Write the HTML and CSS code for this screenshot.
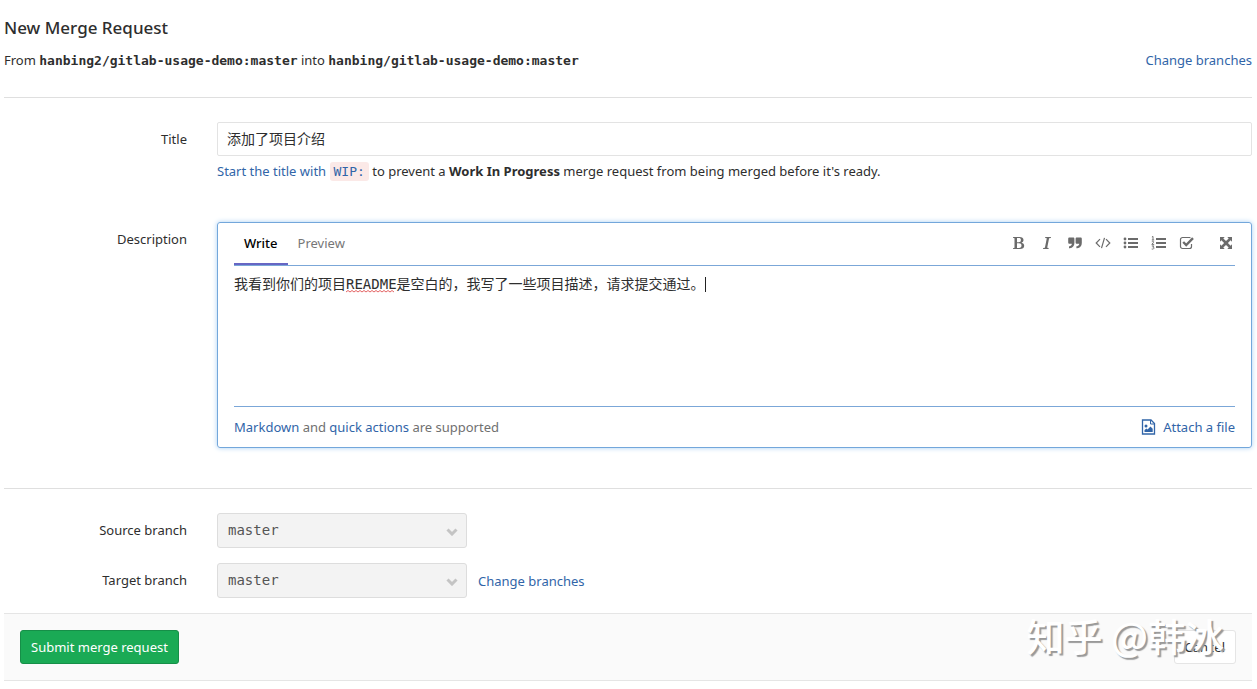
FILE: index.html
```html
<!DOCTYPE html>
<html lang="en">
<head>
<meta charset="utf-8">
<title>New Merge Request</title>
<link rel="stylesheet" href="styles.css">
</head>
<body>
<main class="page">
  <h1 class="page-title">New Merge Request</h1>
  <form class="mr-form">
    <div class="branches">
      <p class="branches-text">From <strong class="ref">hanbing2/gitlab-usage-demo:master</strong> into <strong class="ref">hanbing/gitlab-usage-demo:master</strong></p>
      <a class="link" href="#">Change branches</a>
    </div>

    <div class="row row-title">
      <label class="label" for="title">Title</label>
      <div class="field">
        <input class="text-input" id="title" type="text" value="添加了项目介绍">
        <p class="hint"><a class="link" href="#">Start the title with <code class="code">WIP:</code></a> to prevent a <strong>Work In Progress</strong> merge request from being merged before it's ready.</p>
      </div>
    </div>

    <div class="row row-description">
      <label class="label" for="description">Description</label>
      <div class="editor">
        <div class="editor-head">
          <div class="tabs">
            <button class="tab tab-active" type="button">Write</button>
            <button class="tab" type="button">Preview</button>
          </div>
          <div class="toolbar">
            <button class="tool" type="button" aria-label="Bold"><svg viewBox="0 0 14 14"><path fill-rule="evenodd" d="M1 1h6.5C10 1 11.5 2 11.500 4c0 1.500-.8 2.300-2 2.700 1.800.4 2.700 1.500 2.700 3C12.200 12 10.500 13 8 13H1v-.8l1.500-.4V2.200L1 1.800zM5 2v4.200h1.800C8.200 6.200 8.900 5.500 8.900 4S8.200 2 6.800 2zM5 7.200V12h2c1.700 0 2.500-.8 2.500-2.400S8.700 7.200 7 7.200z"/></svg></button>
            <button class="tool" type="button" aria-label="Italic"><svg viewBox="0 0 14 14"><path d="M5.300 1H11l-.2.900-1.700.3L7.200 11.800l1.500.3-.2.900H3l.2-.9 1.700-.3L6.800 2.200l-1.700-.3z"/></svg></button>
            <button class="tool" type="button" aria-label="Quote"><svg viewBox="0 0 14 14"><path d="M1.500 1.500h3.600c.8 0 1.300.5 1.300 1.300V7c0 3-1.600 4.900-4.600 5.200H1v-2h.8c1.300-.3 2-1 2-2.400H1.500C.7 7.800.2 7.300.2 6.500V2.800c0-.8.5-1.300 1.300-1.300zm7.400 0h3.600c.8 0 1.300.5 1.300 1.300V7c0 3-1.600 4.900-4.600 5.200h-.8v-2h.8c1.300-.3 2-1 2-2.400H8.900c-.8 0-1.300-.5-1.300-1.300V2.800c0-.8.5-1.300 1.300-1.300z"/></svg></button>
            <button class="tool" type="button" aria-label="Code"><svg viewBox="0 0 16 14"><path d="M5 3.200 1.200 7 5 10.800M11 3.200 14.800 7 11 10.800M9.500 1.800l-3 10.400" fill="none" stroke="currentColor" stroke-width="1.200"/></svg></button>
            <button class="tool" type="button" aria-label="Bulleted list"><svg viewBox="0 0 16 14"><path d="M5 2h10v2H5zM5 6h10v2H5zM5 10h10v2H5z"/><circle cx="2" cy="3" r="1.400"/><circle cx="2" cy="7" r="1.400"/><circle cx="2" cy="11" r="1.400"/></svg></button>
            <button class="tool" type="button" aria-label="Numbered list"><svg viewBox="0 0 16 14"><path d="M5 2h10v2H5zM5 6h10v2H5zM5 10h10v2H5z"/><path d="M.9 1 2 .4V4M.8 4h2.400M.8 5.700c1-.8 2.200-.3 1.800.5L.8 8.400h2.400M.8 9.900h2l-1 1.200c2 0 1.500 2.600-1.100 1.900" fill="none" stroke="currentColor" stroke-width=".9"/></svg></button>
            <button class="tool" type="button" aria-label="Task list"><svg viewBox="0 0 16 14"><path d="M12.500 8v2.500a2 2 0 0 1-2 2h-7a2 2 0 0 1-2-2v-7a2 2 0 0 1 2-2h7l1 .3" fill="none" stroke="currentColor" stroke-width="1.200"/><path d="m4.200 6 3 3L14 2.200" fill="none" stroke="currentColor" stroke-width="2.400"/></svg></button>
            <button class="tool tool-last" type="button" aria-label="Full screen"><svg viewBox="0 0 14 14"><path d="M1 1h4.700L4.300 2.400 7 5.100l2.700-2.700L8.300 1H13v4.700l-1.400-1.400L8.900 7l2.700 2.700L13 8.300V13H8.300l1.400-1.400L7 8.900l-2.700 2.700L5.700 13H1V8.300l1.400 1.400L5.100 7 2.400 4.300 1 5.700z"/></svg></button>
          </div>
        </div>
        <div class="editor-body">
          <textarea class="textarea" id="description" spellcheck="false">我看到你们的项目README是空白的，我写了一些项目描述，请求提交通过。</textarea>
          <svg class="squiggle" viewBox="0 0 50 3" aria-hidden="true"><path d="M0 2 2 .500l2 1.500 2-1.500 2 1.500 2-1.500 2 1.500 2-1.500 2 1.500 2-1.500 2 1.500 2-1.500 2 1.500 2-1.500 2 1.500 2-1.500 2 1.500 2-1.500 2 1.500 2-1.500 2 1.500 2-1.500 2 1.500 2-1.500 2 1.500"/></svg>
          <span class="caret"></span>
        </div>
        <div class="editor-foot">
          <p class="support"><a class="link" href="#">Markdown</a> and <a class="link" href="#">quick actions</a> are supported</p>
          <button class="attach" type="button"><svg class="attach-icon" viewBox="0 0 14 16"><path d="M1 1h8.500L13 4.500V15H1z" fill="none" stroke="currentColor" stroke-width="1.300"/><path d="M9 1v4h4" fill="none" stroke="currentColor"/><circle cx="4.500" cy="7" r="1.500"/><path d="M3 13v-2l2-1.500 1 1L9 7.500l2.200 2.200V13z"/></svg>Attach a file</button>
        </div>
      </div>
    </div>

    <div class="branch-rows">
      <div class="row">
        <label class="label" for="source">Source branch</label>
        <div class="select-line">
          <div class="select-box"><select class="select" id="source" disabled><option>master</option></select><svg class="chevron" viewBox="0 0 12 8"><path d="m1.500 1.500 4.500 4.500 4.500-4.500"/></svg></div>
        </div>
      </div>
      <div class="row">
        <label class="label" for="target">Target branch</label>
        <div class="select-line">
          <div class="select-box"><select class="select" id="target" disabled><option>master</option></select><svg class="chevron" viewBox="0 0 12 8"><path d="m1.500 1.500 4.500 4.500 4.500-4.500"/></svg></div>
          <a class="link" href="#">Change branches</a>
        </div>
      </div>
    </div>

    <div class="actions">
      <button class="btn btn-submit" type="submit">Submit merge request</button>
      <button class="btn btn-cancel" type="button">Cancel</button>
      <span class="watermark">知乎 @韩冰</span>
    </div>
  </form>
</main>
</body>
</html>
```

FILE: styles.css
```css
* { box-sizing: border-box; }

body {
  margin: 0;
  background: #fff;
  color: #2e2e2e;
  font: 13px/20px "Noto Sans", "Noto Sans CJK SC", sans-serif;
}

p { margin: 0; }
input, textarea, select, button { font: inherit; color: inherit; margin: 0; }
button { padding: 0; border: 0; background: none; }
svg { fill: currentColor; }

.page { padding: 16px 5px 8px 4px; }
.page-title { margin: 0; font-size: 17px; line-height: 24px; font-weight: 500; }
.link { color: #3165a8; text-decoration: none; }

.branches {
  display: flex;
  justify-content: space-between;
  padding: 10px 0 26px;
  border-bottom: 1px solid #dfdfdf;
}
.ref { font: bold 13px/20px "DejaVu Sans Mono", monospace; }

.row { display: grid; grid-template-columns: 183px 1fr; column-gap: 30px; }
.row-title { padding-top: 24px; }
.row-description { padding: 41px 0 40px; border-bottom: 1px solid #dfdfdf; }
.label { padding-top: 7px; text-align: right; }

.text-input {
  display: block;
  width: 100%;
  height: 34px;
  padding: 5px 9px 7px;
  border: 1px solid #e3e3e3;
  border-radius: 2px;
  font-size: 14px;
}
.hint { padding-top: 5px; }
.code {
  padding: 2px 4px;
  border-radius: 3px;
  background: #fbe9e7;
  font: 13px/16px "DejaVu Sans Mono", monospace;
}

.editor {
  padding: 0 16px;
  border: 1px solid #73a7db;
  border-radius: 3px;
  box-shadow: 0 0 5px #a9cff3;
}
.editor-head { display: flex; justify-content: space-between; border-bottom: 1px solid #7ba7d8; }
.tabs { display: flex; }
.tab { height: 42px; padding: 0 10px; color: #777; border-bottom: 2px solid transparent; }
.tab-active { color: #000; font-weight: 500; border-color: #6666c4; }
.toolbar { display: flex; align-items: center; gap: 12px; padding: 0 1px 2px 0; color: #6b6b6b; }
.tool { display: flex; width: 16px; height: 14px; justify-content: center; }
.tool svg { height: 14px; }
.tool-last { margin-left: 11px; }

.editor-body { position: relative; }
.textarea {
  display: block;
  width: 100%;
  height: 140px;
  padding: 8px 0;
  border: 0;
  outline: 0;
  resize: none;
  background: none;
  font: 14px/20px "DejaVu Sans Mono", "Noto Sans CJK SC", monospace;
}
.squiggle { position: absolute; left: 112px; top: 24px; width: 50px; height: 3px; fill: none; stroke: #e36464; }
.caret { position: absolute; left: 471px; top: 11px; width: 1px; height: 15px; background: #222; }

.editor-foot { display: flex; justify-content: space-between; padding: 10px 0; border-top: 1px solid #7ba7d8; }
.support { color: #707070; }
.attach { display: flex; align-items: center; gap: 7px; color: #3165a8; }
.attach-icon { width: 15px; height: 16px; }

.branch-rows { display: grid; gap: 15px; padding: 24px 0 15px; }
.select-line { display: flex; align-items: center; gap: 11px; }
.select-box { position: relative; width: 250px; }
.select {
  display: block;
  width: 100%;
  height: 35px;
  padding: 0 10px 2px;
  appearance: none;
  border: 1px solid #ddd;
  border-radius: 3px;
  background: #f3f3f3;
  color: #555;
  opacity: 1;
  font: 14px/20px "DejaVu Sans Mono", monospace;
}
.chevron { position: absolute; right: 9px; top: 15px; width: 12px; height: 8px; fill: none; stroke: #c4c4c4; stroke-width: 3; }

.actions {
  position: relative;
  display: flex;
  justify-content: space-between;
  padding: 16px;
  border: solid #e5e5e5;
  border-width: 1px 0;
  background: #fafafa;
}
.btn { height: 34px; padding: 0 10px; border: 1px solid #e5e5e5; border-radius: 3px; background: #fff; }
.btn-submit { border-color: #168f48; background: #1aaa55; color: #fff; }
.watermark {
  position: absolute;
  right: 28px;
  top: -4px;
  color: #fff;
  font: 500 38px/50px "Noto Sans CJK SC", sans-serif;
  text-shadow: 2px 2px 1px #999;
  pointer-events: none;
}
```
